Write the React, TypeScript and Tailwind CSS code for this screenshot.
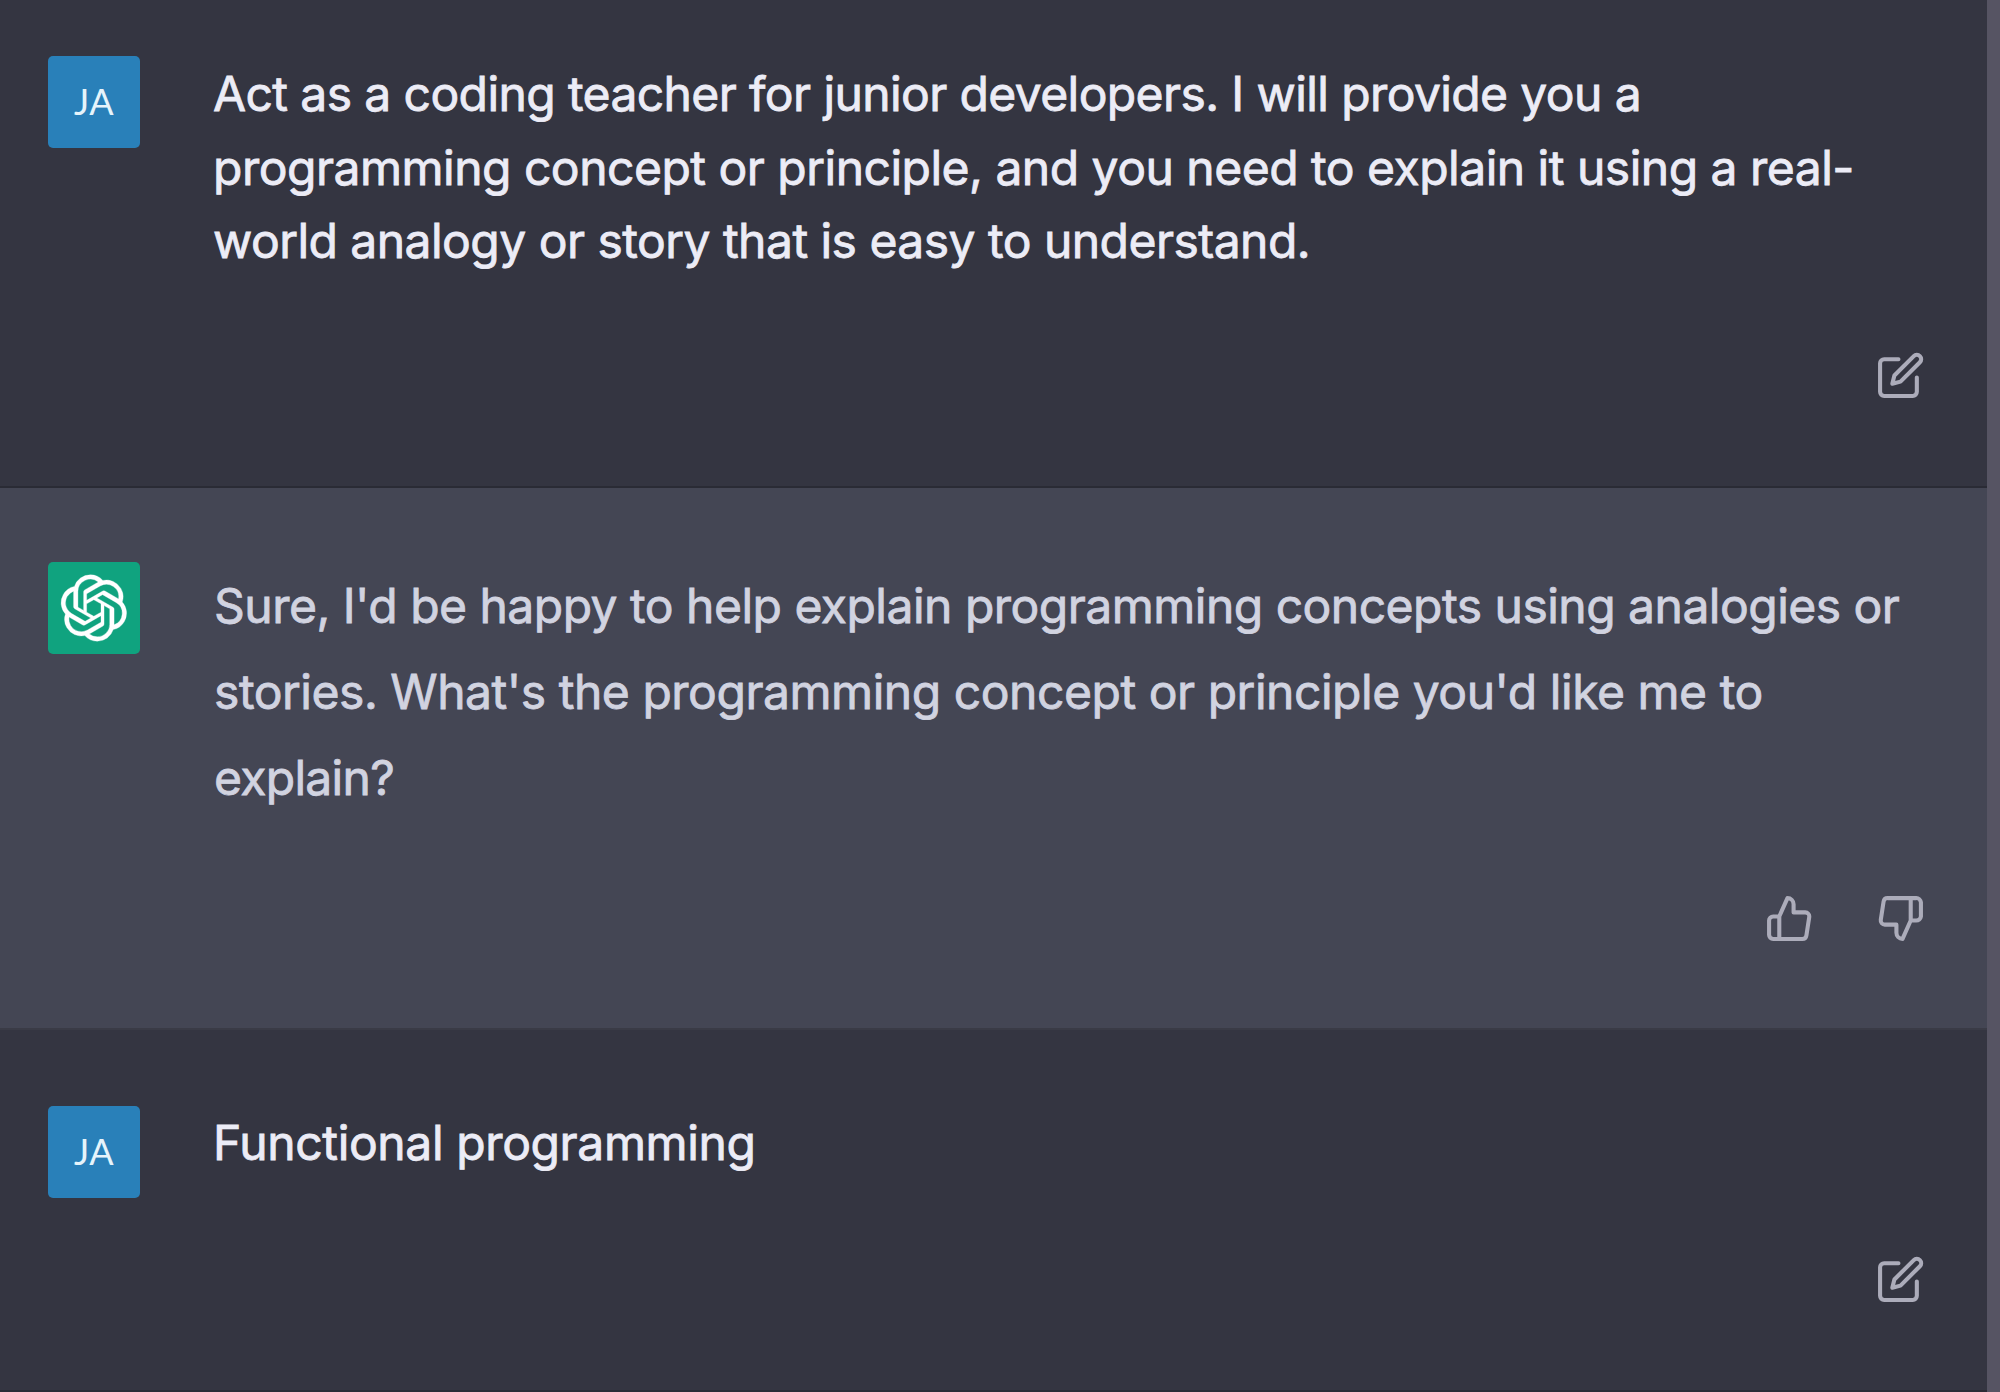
import React from "react";

const lineBase = "block w-max whitespace-nowrap";

function JaAvatar() {
  return (
    <div className="flex h-[92px] w-[92px] shrink-0 items-center justify-center rounded-[5px] bg-[#2980b9] pb-[3px] font-['Lato',sans-serif] text-[36px] leading-none tracking-[0.5px] text-[#e6f4fb]">
      JA
    </div>
  );
}

function BotAvatar() {
  return (
    <div className="flex h-[92px] w-[92px] shrink-0 items-center justify-center rounded-[5px] bg-[#10a37f] text-white">
      <svg className="h-[68px] w-[68px]" viewBox="0 0 41 41" fill="none">
        <path
          fill="currentColor"
          stroke="currentColor"
          strokeWidth="0.2"
          d="M37.532 16.87a9.963 9.963 0 0 0-.856-8.184 10.078 10.078 0 0 0-10.855-4.835A9.964 9.964 0 0 0 18.306.5a10.079 10.079 0 0 0-9.614 6.977 9.967 9.967 0 0 0-6.664 4.834 10.08 10.08 0 0 0 1.24 11.817 9.965 9.965 0 0 0 .856 8.185 10.079 10.079 0 0 0 10.855 4.835 9.965 9.965 0 0 0 7.516 3.35 10.078 10.078 0 0 0 9.617-6.981 9.967 9.967 0 0 0 6.663-4.834 10.079 10.079 0 0 0-1.243-11.813zM22.498 37.886a7.474 7.474 0 0 1-4.799-1.735c.061-.033.168-.091.237-.134l7.964-4.6a1.294 1.294 0 0 0 .655-1.134V19.054l3.366 1.944a.12.12 0 0 1 .066.092v9.299a7.505 7.505 0 0 1-7.49 7.496zM6.392 31.006a7.471 7.471 0 0 1-.894-5.023c.06.036.162.099.237.141l7.964 4.6a1.297 1.297 0 0 0 1.308 0l9.724-5.614v3.888a.12.12 0 0 1-.048.103l-8.051 4.649a7.504 7.504 0 0 1-10.24-2.744zM4.297 13.62A7.469 7.469 0 0 1 8.2 10.333c0 .068-.004.19-.004.274v9.201a1.294 1.294 0 0 0 .654 1.132l9.723 5.614-3.366 1.944a.12.12 0 0 1-.114.01L7.04 23.856a7.504 7.504 0 0 1-2.743-10.237zm27.658 6.437l-9.724-5.615 3.367-1.943a.121.121 0 0 1 .113-.01l8.052 4.648a7.498 7.498 0 0 1-1.158 13.528v-9.476a1.293 1.293 0 0 0-.65-1.132zm3.35-5.043c-.059-.037-.162-.099-.236-.141l-7.965-4.6a1.298 1.298 0 0 0-1.308 0l-9.723 5.614v-3.888a.12.12 0 0 1 .048-.103l8.05-4.645a7.497 7.497 0 0 1 11.135 7.763zm-21.063 6.929l-3.367-1.944a.12.12 0 0 1-.065-.092v-9.299a7.497 7.497 0 0 1 12.293-5.756 6.94 6.94 0 0 0-.236.134l-7.965 4.6a1.294 1.294 0 0 0-.654 1.132l-.006 11.225zm1.829-3.943l4.33-2.501 4.332 2.5v5l-4.331 2.5-4.331-2.5V18z"
        />
      </svg>
    </div>
  );
}

function Icon({ children }: { children: React.ReactNode }) {
  return (
    <svg
      className="h-[49px] w-[49px]"
      viewBox="0 0 24 24"
      fill="none"
      stroke="currentColor"
      strokeWidth="2"
      strokeLinecap="round"
      strokeLinejoin="round"
    >
      {children}
    </svg>
  );
}

function EditIcon() {
  return (
    <Icon>
      <path d="M11 4H4a2 2 0 0 0-2 2v14a2 2 0 0 0 2 2h14a2 2 0 0 0 2-2v-7" />
      <path d="M18.5 2.5a2.121 2.121 0 0 1 3 3L12 15l-4 1 1-4 9.5-9.5z" />
    </Icon>
  );
}

function ThumbsUp() {
  return (
    <Icon>
      <path d="M14 9V5a3 3 0 0 0-3-3l-4 9v11h11.28a2 2 0 0 0 2-1.7l1.38-9a2 2 0 0 0-2-2.3zM7 22H4a2 2 0 0 1-2-2v-7a2 2 0 0 1 2-2h3" />
    </Icon>
  );
}

function ThumbsDown() {
  return (
    <Icon>
      <path d="M10 15v4a3 3 0 0 0 3 3l4-9V2H5.72a2 2 0 0 0-2 1.7l-1.38 9a2 2 0 0 0 2 2.3zm7-13h2.67A2.31 2.31 0 0 1 22 4v7a2.31 2.31 0 0 1-2.33 2H17" />
    </Icon>
  );
}

export default function App() {
  return (
    <div className="flex h-[1392px] w-[2000px] overflow-hidden bg-[#343541] font-['Inter',sans-serif] text-[48px]">
      <main className="flex w-[1987px] flex-col">
        <section className="flex h-[488px] flex-col border-b-2 border-[#2a2b35] bg-[#343541] pt-[56px] pr-[62px] pl-[48px]">
          <div className="flex h-[295px] gap-[73px]">
            <JaAvatar />
            <p className="pt-px leading-[73.7px] text-[#ececf6] [-webkit-text-stroke:0.8px_#ececf6]">
              <span className={lineBase + " tracking-[-0.6px]"}>Act as a coding teacher for junior developers. I will provide you a</span>
              <span className={lineBase + " tracking-[-0.5px]"}>programming concept or principle, and you need to explain it using a real-</span>
              <span className={lineBase + " tracking-[-0.53px]"}>world analogy or story that is easy to understand.</span>
            </p>
          </div>
          <div className="flex justify-end text-[#acacba]">
            <EditIcon />
          </div>
        </section>
        <section className="flex h-[542px] flex-col border-b-2 border-[#3a3b46] bg-[#444654] pt-[74px] pr-[62px] pl-[48px]">
          <div className="flex h-[332px] gap-[74px]">
            <BotAvatar />
            <p className="pt-px leading-[86px] text-[#d1d3e0] [-webkit-text-stroke:0.8px_#d1d3e0]">
              <span className={lineBase + " tracking-[-0.51px]"}>Sure, I'd be happy to help explain programming concepts using analogies or</span>
              <span className={lineBase + " tracking-[-0.46px]"}>stories. What's the programming concept or principle you'd like me to</span>
              <span className={lineBase + " tracking-[-0.7px]"}>explain?</span>
            </p>
          </div>
          <div className="flex justify-end gap-[62px] text-[#acacba]">
            <ThumbsUp />
            <ThumbsDown />
          </div>
        </section>
        <section className="flex h-[362px] flex-col border-b-2 border-[#2a2b35] bg-[#343541] pt-[76px] pr-[62px] pl-[48px]">
          <div className="flex h-[149px] gap-[73px]">
            <JaAvatar />
            <p className="leading-[73.7px] text-[#ececf6] [-webkit-text-stroke:0.8px_#ececf6]">
              <span className={lineBase + " tracking-[-0.38px]"}>Functional programming</span>
            </p>
          </div>
          <div className="flex justify-end text-[#acacba]">
            <EditIcon />
          </div>
        </section>
      </main>
      <aside className="flex-1 bg-[#565463]" />
    </div>
  );
}
